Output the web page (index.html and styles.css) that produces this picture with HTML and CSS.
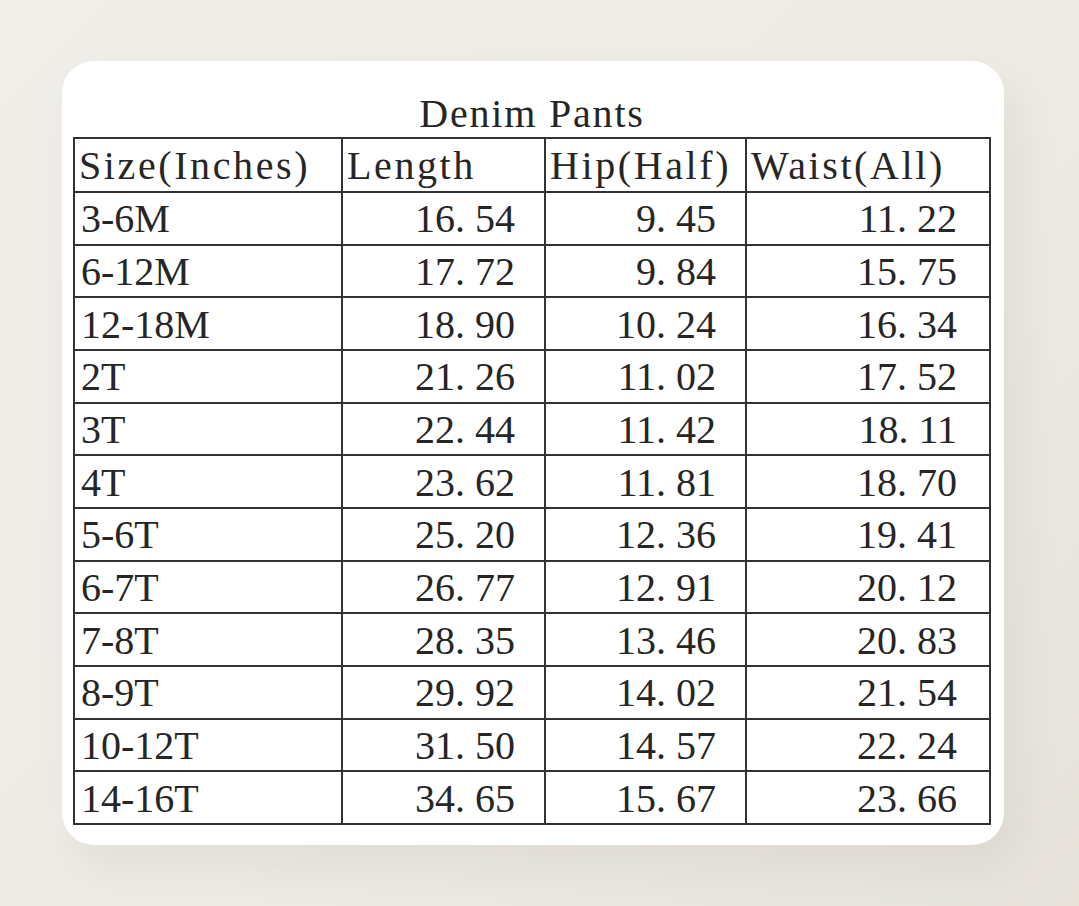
FILE: index.html
```html
<!DOCTYPE html>
<html lang="en">
<head>
<meta charset="utf-8">
<title>Denim Pants</title>
<link rel="stylesheet" href="styles.css">
</head>
<body>
<div class="page">
  <div class="card">
    <div class="title">Denim Pants</div>
    <table class="size-table">
      <colgroup>
        <col class="c1"><col class="c2"><col class="c3"><col class="c4">
      </colgroup>
      <thead>
        <tr><th>Size(Inches)</th><th>Length</th><th>Hip(Half)</th><th>Waist(All)</th></tr>
      </thead>
      <tbody>
        <tr><td>3-6M</td><td class="num">16<span class="dot">.</span>54</td><td class="num">9<span class="dot">.</span>45</td><td class="num w">11<span class="dot">.</span>22</td></tr>
        <tr><td>6-12M</td><td class="num">17<span class="dot">.</span>72</td><td class="num">9<span class="dot">.</span>84</td><td class="num w">15<span class="dot">.</span>75</td></tr>
        <tr><td>12-18M</td><td class="num">18<span class="dot">.</span>90</td><td class="num">10<span class="dot">.</span>24</td><td class="num w">16<span class="dot">.</span>34</td></tr>
        <tr><td>2T</td><td class="num">21<span class="dot">.</span>26</td><td class="num">11<span class="dot">.</span>02</td><td class="num w">17<span class="dot">.</span>52</td></tr>
        <tr><td>3T</td><td class="num">22<span class="dot">.</span>44</td><td class="num">11<span class="dot">.</span>42</td><td class="num w">18<span class="dot">.</span>11</td></tr>
        <tr><td>4T</td><td class="num">23<span class="dot">.</span>62</td><td class="num">11<span class="dot">.</span>81</td><td class="num w">18<span class="dot">.</span>70</td></tr>
        <tr><td>5-6T</td><td class="num">25<span class="dot">.</span>20</td><td class="num">12<span class="dot">.</span>36</td><td class="num w">19<span class="dot">.</span>41</td></tr>
        <tr><td>6-7T</td><td class="num">26<span class="dot">.</span>77</td><td class="num">12<span class="dot">.</span>91</td><td class="num w">20<span class="dot">.</span>12</td></tr>
        <tr><td>7-8T</td><td class="num">28<span class="dot">.</span>35</td><td class="num">13<span class="dot">.</span>46</td><td class="num w">20<span class="dot">.</span>83</td></tr>
        <tr><td>8-9T</td><td class="num">29<span class="dot">.</span>92</td><td class="num">14<span class="dot">.</span>02</td><td class="num w">21<span class="dot">.</span>54</td></tr>
        <tr><td>10-12T</td><td class="num">31<span class="dot">.</span>50</td><td class="num">14<span class="dot">.</span>57</td><td class="num w">22<span class="dot">.</span>24</td></tr>
        <tr><td>14-16T</td><td class="num">34<span class="dot">.</span>65</td><td class="num">15<span class="dot">.</span>67</td><td class="num w">23<span class="dot">.</span>66</td></tr>
      </tbody>
    </table>
  </div>
</div>
</body>
</html>
```

FILE: styles.css
```css
html, body {
  margin: 0;
  padding: 0;
}
body {
  width: 1079px;
  height: 906px;
  overflow: hidden;
  background: linear-gradient(135deg, #f0eee9 0%, #eeebe5 55%, #e7e3db 100%);
  font-family: "Liberation Serif", "Times New Roman", serif;
  color: #262626;
}
.page {
  padding: 61px 0 0 62px;
}
.card {
  box-sizing: border-box;
  width: 942px;
  height: 784px;
  background: #ffffff;
  border-radius: 32px;
  padding: 27px 15px 0 11px;
  box-shadow: 14px 22px 40px rgba(90, 80, 60, 0.08);
}
.title {
  height: 49px;
  line-height: 52px;
  text-align: center;
  font-size: 40px;
  letter-spacing: 1.8px;
  padding-left: 2px;
}
.size-table {
  border-collapse: collapse;
  table-layout: fixed;
  width: 916px;
  font-size: 40px;
}
.c1 { width: 268px; }
.c2 { width: 203px; }
.c3 { width: 201px; }
.c4 { width: 244px; }
.size-table th,
.size-table td {
  border: 2px solid #333333;
  padding: 0 0 0 6px;
  white-space: nowrap;
  overflow: hidden;
  line-height: 40px;
}
.size-table th {
  height: 50px;
  text-align: left;
  font-weight: normal;
  letter-spacing: 2.6px;
  padding-top: 2px;
  padding-left: 4px;
}
.size-table td {
  height: 48.67px;
  padding-top: 2px;
}
.size-table td.num {
  text-align: right;
  padding-left: 0;
  padding-right: 29px;
}
.size-table td.num.w {
  padding-right: 32px;
}
.dot {
  display: inline-block;
  width: 20px;
  text-align: left;
}
```
